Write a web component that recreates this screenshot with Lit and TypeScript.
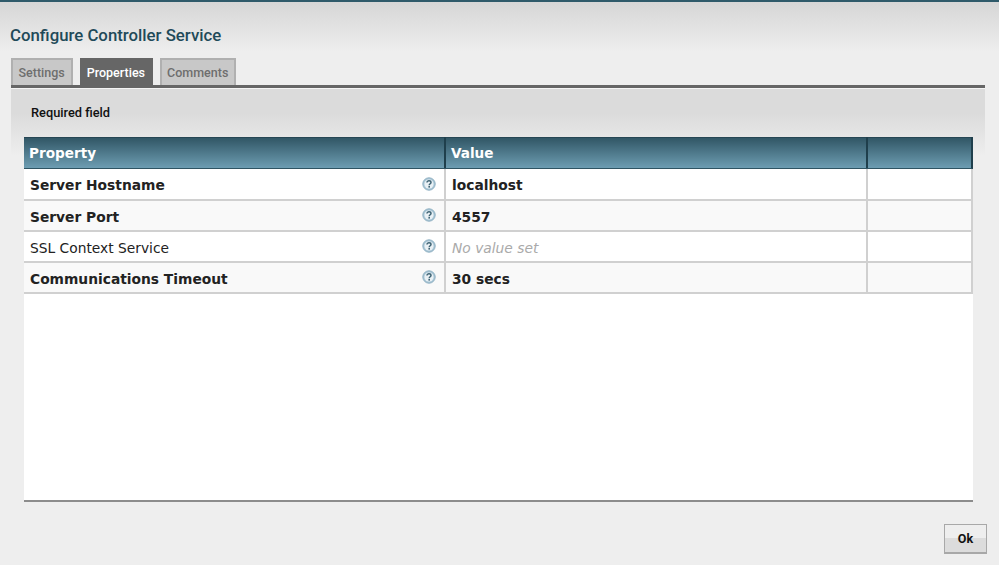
import { LitElement, html, css, svg } from "lit";
import { customElement } from "lit/decorators.js";

const rows = [
  { name: "Server Hostname", value: "localhost", required: true },
  { name: "Server Port", value: "4557", required: true },
  { name: "SSL Context Service", value: "No value set", required: false },
  { name: "Communications Timeout", value: "30 secs", required: true },
];

const help = svg`<svg class="help" width="14" height="14" viewBox="0 0 14 14">
  <circle cx="7" cy="7" r="6.2" fill="#a9c6d6" stroke="#8fb0c2" stroke-width="1"/>
  <circle cx="7" cy="7" r="4.6" fill="#eaf1f5"/>
  <path d="M5 5.6C5 4.4 5.9 3.8 7 3.8S9 4.5 9 5.5C9 6.7 7.2 6.8 7.2 8.2" fill="none" stroke="#3f6475" stroke-width="1.5"/>
  <rect x="6.4" y="9" width="1.6" height="1.6" fill="#3f6475"/>
</svg>`;

@customElement("app-root")
export class AppRoot extends LitElement {
  static styles = css`
    :host {
      display: block;
      width: 999px;
      height: 565px;
      overflow: hidden;
      background: #eeeeee;
      font-family: Roboto, sans-serif;
    }
    .dialog {
      height: 565px;
      box-sizing: border-box;
      border-top: 2px solid #2f5a6a;
      background: linear-gradient(#d6d6d6 0, #eeeeee 50px);
      display: flex;
      flex-direction: column;
    }
    .title {
      margin: 0;
      padding: 23px 0 0 10px;
      height: 33px;
      line-height: 20px;
      font-size: 16.8px;
      font-weight: 500;
      color: #1f4a59;
    }
    .tabs {
      display: flex;
      gap: 7px;
      margin: 0 0 0 11px;
      height: 27px;
    }
    .tab {
      box-sizing: border-box;
      padding: 0 5.5px;
      border: 2px solid #b0b0b0;
      border-bottom: 0;
      background: #c8c8c8;
      color: #6e6e6e;
      font-size: 12.5px;
      font-weight: 500;
      line-height: 25px;
    }
    .tab:first-child {
      padding-right: 6.5px;
    }
    .tab.active {
      padding-left: 4.5px;
      background: #666666;
      border-color: #666666;
      color: #ffffff;
    }
    .panel {
      margin: 0 14px 0 11px;
      border-top: 3px solid #666666;
      box-shadow: inset 0 1px 0 #f4f4f4;
      display: flex;
      flex-direction: column;
      background: linear-gradient(#dbdbdb 0, #dbdbdb 25px, #eeeeee 68px);
      background-size: 100% 68px;
      background-repeat: no-repeat;
    }
    .required {
      padding: 18px 0 0 20px;
      height: 31px;
      line-height: 14px;
      font-size: 12.8px;
      font-weight: 500;
      color: #111111;
    }
    .table {
      margin: 0 12px 0 13px;
      width: 949px;
      height: 365px;
      box-sizing: border-box;
      background: #ffffff;
      border-bottom: 2px solid #8c8c8c;
      font-family: "DejaVu Sans", sans-serif;
      font-size: 13.8px;
    }
    .line {
      display: grid;
      grid-template-columns: 422px 422px 105px;
    }
    .head {
      height: 32px;
      box-sizing: border-box;
      background: linear-gradient(#2f5463, #6d9db2);
      border-bottom: 1px solid #2f5463;
      border-right: 2px solid #1f3f4c;
      box-shadow: inset 0 1px 0 #264654;
      color: #ffffff;
      font-weight: bold;
      font-size: 13.6px;
      line-height: 31px;
      grid-template-rows: 31px;
    }
    .head > div {
      box-sizing: border-box;
      padding: 1px 0 0 5px;
      border-right: 2px solid #1f3f4c;
    }
    .head > div:last-child {
      border-right: 0;
    }
    .row {
      height: 31px;
      box-sizing: border-box;
      border-bottom: 2px solid #d0d0d0;
      border-right: 2px solid #d0d0d0;
      color: #222222;
      line-height: 25px;
      grid-template-rows: 29px;
    }
    .head + .row {
      height: 32px;
      grid-template-rows: 30px;
    }
    .row:nth-child(odd) {
      background: #f9f9f9;
    }
    .row > div {
      padding: 4px 0 0 6px;
      box-sizing: border-box;
      border-right: 2px solid #d0d0d0;
      white-space: nowrap;
    }
    .row > div:last-child {
      border-right: 0;
    }
    .row.req {
      font-weight: bold;
    }
    .row > .name {
      display: flex;
      justify-content: space-between;
      align-items: flex-start;
      padding-right: 8px;
    }
    .help {
      margin-top: 3px;
      flex: none;
    }
    .head + .row .help {
      margin-top: 4px;
    }
    .row > .empty {
      font-style: italic;
      font-weight: normal;
      color: #aaaaaa;
    }
    .footer {
      display: flex;
      justify-content: flex-end;
      padding: 22px 12px 0 0;
    }
    .ok {
      box-sizing: border-box;
      width: 43px;
      height: 30px;
      border: 1px solid #a8a8a8;
      border-bottom-width: 2px;
      background: linear-gradient(#eeeeee 0, #eeeeee 50%, #dcdcdc 50%, #dcdcdc 100%);
      font-family: Roboto, sans-serif;
      font-size: 12.5px;
      font-weight: 700;
      color: #111111;
      padding: 0;
    }
  `;

  render() {
    return html`
      <div class="dialog">
        <h1 class="title">Configure Controller Service</h1>
        <div class="tabs">
          <div class="tab">Settings</div>
          <div class="tab active">Properties</div>
          <div class="tab">Comments</div>
        </div>
        <div class="panel">
          <div class="required">Required field</div>
          <div class="table">
            <div class="line head">
              <div>Property</div>
              <div>Value</div>
              <div></div>
            </div>
            ${rows.map(
              (r) => html`
                <div class="line row ${r.required ? "req" : ""}">
                  <div class="name"><span>${r.name}</span>${help}</div>
                  <div class=${r.required ? "" : "empty"}>${r.value}</div>
                  <div></div>
                </div>
              `
            )}
          </div>
        </div>
        <div class="footer"><button class="ok">Ok</button></div>
      </div>
    `;
  }
}
